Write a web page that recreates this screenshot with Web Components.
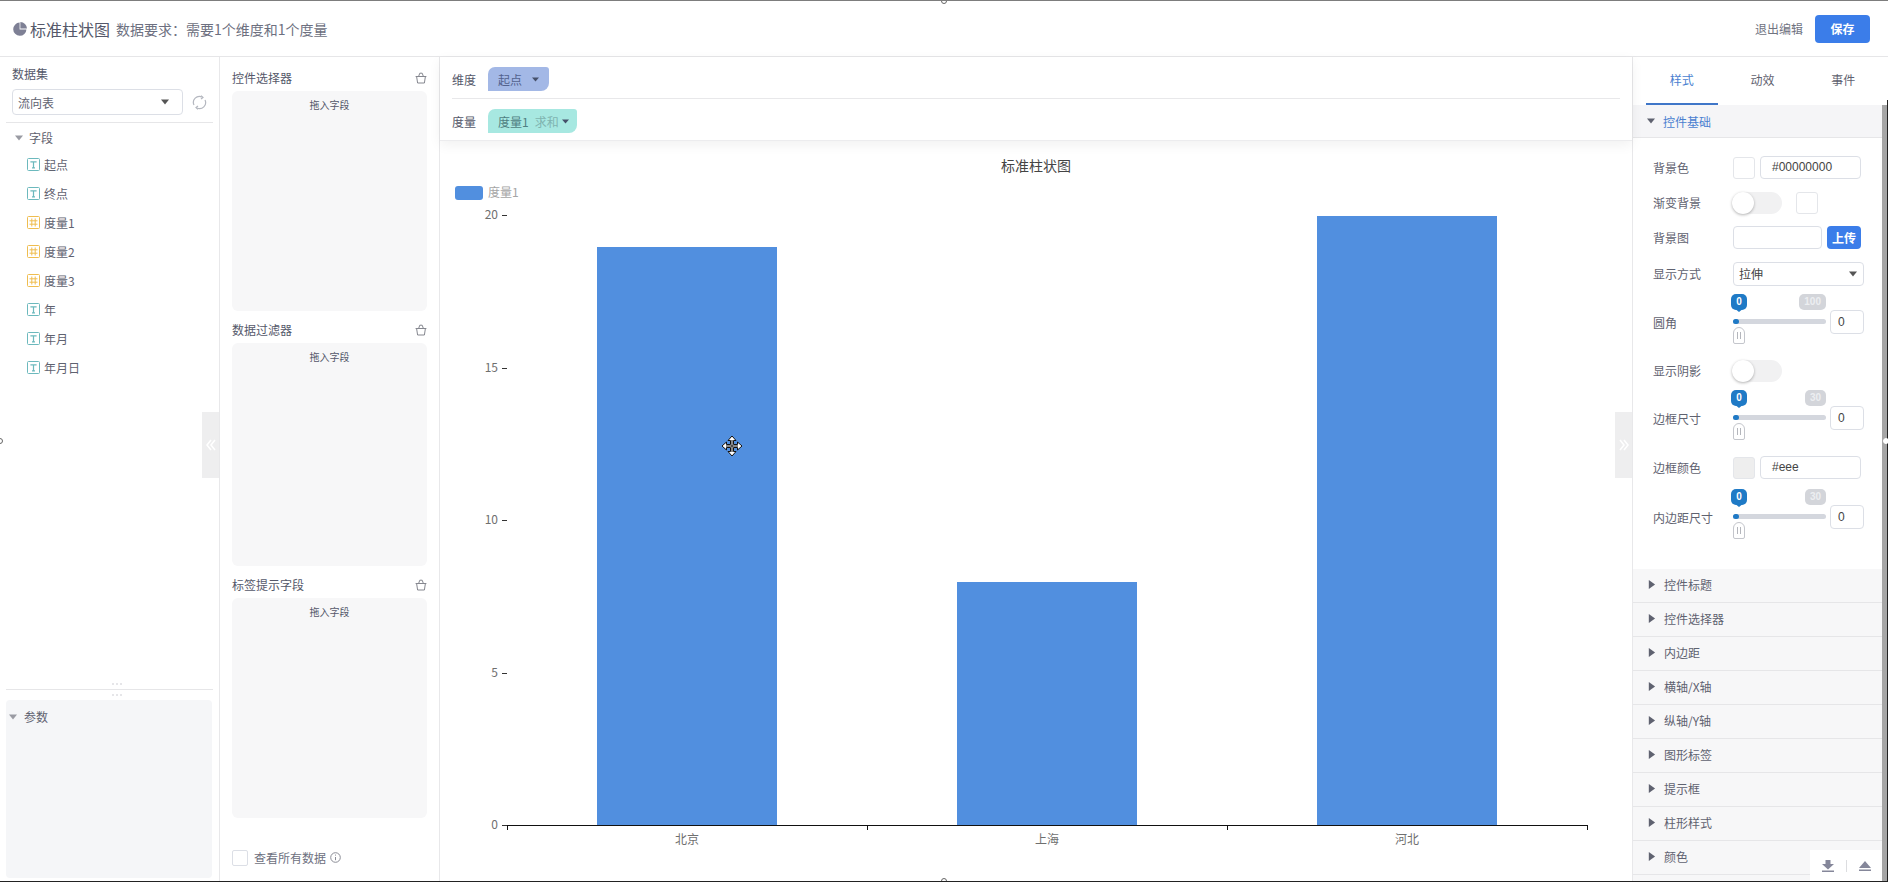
<!DOCTYPE html>
<html lang="zh">
<head>
<meta charset="utf-8">
<title>标准柱状图</title>
<style>
  html, body { margin: 0; padding: 0; height: 882px; overflow: hidden; background: #fff; }
  body { font-family: "Noto Sans CJK SC", "Liberation Sans", sans-serif; font-size: 12px; color: #5f6270; }
</style>
</head>
<body>
<editor-frame>
  <editor-header slot="header"></editor-header>
  <data-panel slot="data">
    <field-item kind="text">起点</field-item>
    <field-item kind="text">终点</field-item>
    <field-item kind="num">度量1</field-item>
    <field-item kind="num">度量2</field-item>
    <field-item kind="num">度量3</field-item>
    <field-item kind="text">年</field-item>
    <field-item kind="text">年月</field-item>
    <field-item kind="text">年月日</field-item>
  </data-panel>
  <field-panel slot="fields">
    <drop-zone label="控件选择器" area="220"></drop-zone>
    <drop-zone label="数据过滤器" area="223"></drop-zone>
    <drop-zone label="标签提示字段" area="220"></drop-zone>
  </field-panel>
  <chart-area slot="chart">
    <shelf-row label="维度" divider><shelf-chip tone="blue" width="61">起点</shelf-chip></shelf-row>
    <shelf-row label="度量"><shelf-chip tone="teal" width="89" note="求和">度量1</shelf-chip></shelf-row>
    <bar-chart></bar-chart>
  </chart-area>
  <style-panel slot="style">
    <color-row label="背景色" value="#00000000" fill="#fff" top="18"></color-row>
    <toggle-row label="渐变背景" swatch top="12"></toggle-row>
    <upload-row label="背景图" top="12"></upload-row>
    <select-row label="显示方式" value="拉伸" top="13"></select-row>
    <slider-row label="圆角" max="100" top="9"></slider-row>
    <toggle-row label="显示阴影" top="15"></toggle-row>
    <slider-row label="边框尺寸" max="30" top="8"></slider-row>
    <color-row label="边框颜色" value="#eee" fill="#eee" top="16"></color-row>
    <slider-row label="内边距尺寸" max="30" top="10"></slider-row>
    <collapse-row slot="rest">控件标题</collapse-row>
    <collapse-row slot="rest">控件选择器</collapse-row>
    <collapse-row slot="rest">内边距</collapse-row>
    <collapse-row slot="rest">横轴/X轴</collapse-row>
    <collapse-row slot="rest">纵轴/Y轴</collapse-row>
    <collapse-row slot="rest">图形标签</collapse-row>
    <collapse-row slot="rest">提示框</collapse-row>
    <collapse-row slot="rest">柱形样式</collapse-row>
    <collapse-row slot="rest">颜色</collapse-row>
  </style-panel>
</editor-frame>

<script>
const caret = (dir, color, size) => {
  const points = dir === "right" ? "2,0 9,5 2,10" : "0,2 10,2 5,8";
  return `<svg width="${size}" height="${size}" viewBox="0 0 10 10" style="flex:none;display:block"><polygon points="${points}" fill="${color}"/></svg>`;
};

const chevrons = (flip) => `<svg width="10" height="12" viewBox="0 0 10 12" fill="none" stroke="#fff" stroke-width="1.6" ${flip ? 'transform="scale(-1 1)"' : ""}><path d="M5 1 1 6l4 5M9 1 5 6l4 5"/></svg>`;

class BaseElement extends HTMLElement {
  render(html) {
    if (!this.shadowRoot) this.attachShadow({ mode: "open" });
    this.shadowRoot.innerHTML = html;
  }
}

class EditorFrame extends BaseElement {
  connectedCallback() {
    this.render(`
      <style>
        :host { display: block; position: relative; width: 1888px; height: 882px; box-sizing: border-box;
          border-top: 1px solid #7d7d7d; border-bottom: 1px solid #222; overflow: hidden; }
        .main { display: flex; height: 824px; }
        .knob { position: absolute; width: 6px; height: 6px; border-radius: 50%; background: #fff; border: 1px solid #666; box-sizing: border-box; }
        .edge { position: absolute; right: 0; top: 99px; bottom: 0; width: 1px; background: #222; }
      </style>
      <slot name="header"></slot>
      <div class="main">
        <slot name="data"></slot>
        <slot name="fields"></slot>
        <slot name="chart"></slot>
        <slot name="style"></slot>
      </div>
      <span class="edge"></span>
      <span class="knob" style="left:941px;top:-3px"></span>
      <span class="knob" style="left:-3px;top:437px"></span>
      <span class="knob" style="left:941px;top:877px"></span>
      <span class="knob" style="left:1883px;top:437px;border-color:#fff"></span>
    `);
  }
}

class EditorHeader extends BaseElement {
  connectedCallback() {
    this.render(`
      <style>
        :host { display: flex; align-items: center; height: 56px; box-sizing: border-box; border-bottom: 1px solid #e6e6e8; padding: 0 18px 0 13px; }
        .title { font-size: 16px; color: #55586a; margin-left: 3px; }
        .desc { font-size: 14px; color: #6d7080; margin-left: 6px; }
        .exit { margin-left: auto; font-size: 12px; color: #70737f; }
        button { margin-left: 12px; width: 55px; height: 28px; border: 0; border-radius: 4px; background: #3b7de9; color: #fff; font: bold 12px "Noto Sans CJK SC", sans-serif; }
      </style>
      <svg width="14" height="14" viewBox="0 0 14 14"><path d="M6.6 .6A6.6 6.6 0 1 0 13.4 7.4H6.6Z" fill="#7e8095"/><path d="M7.4 0V6.6H14A7 7 0 0 0 7.4 0Z" fill="#7e8095"/></svg>
      <span class="title">标准柱状图</span>
      <span class="desc">数据要求：需要1个维度和1个度量</span>
      <span class="exit">退出编辑</span>
      <button type="button">保存</button>
    `);
  }
}

class DataPanel extends BaseElement {
  connectedCallback() {
    this.render(`
      <style>
        :host { display: flex; flex-direction: column; position: relative; flex: none; width: 220px; box-sizing: border-box; border-right: 1px solid #e8e8ea; padding-top: 9px; }
        .label { line-height: 16px; margin-left: 12px; color: #55586a; }
        .pick { display: flex; align-items: center; margin: 7px 0 0 12px; }
        .select { display: flex; align-items: center; justify-content: space-between; width: 171px; height: 26px; box-sizing: border-box; border: 1px solid #dcdfe6; border-radius: 4px; padding: 0 13px 0 5px; color: #5f6270; }
        .refresh { margin-left: 9px; }
        hr { border: 0; height: 1px; background: #e6e6e8; margin: 0 6px; }
        .tree-head { display: flex; align-items: center; gap: 6px; margin: 7px 0 4px 15px; line-height: 16px; color: #5f6270; }
        .bottom { margin-top: auto; }
        .dots { display: flex; justify-content: center; align-items: center; gap: 2px; height: 6px; padding-left: 14px; }
        .dots i { width: 2px; height: 2px; border-radius: 50%; background: #dedee2; }
        .params { display: flex; align-items: flex-start; gap: 7px; height: 178px; box-sizing: border-box; margin: 2px 7px 3px 6px; padding: 9px 0 0 3px; background: #f5f6f8; border-radius: 4px; line-height: 16px; color: #5f6270; }
        .params svg { margin-top: 4px; }
        .fold { position: absolute; right: 0; top: 355px; width: 17px; height: 66px; background: #eeeeef; display: flex; align-items: center; justify-content: center; }
      </style>
      <div class="label">数据集</div>
      <div class="pick">
        <div class="select"><span>流向表</span>${caret("down", "#555", 8)}</div>
        <svg class="refresh" width="15" height="15" viewBox="0 0 15 15" fill="none" stroke="#b4b7bf" stroke-width="1.2"><path d="M2 10A6 6 0 0 1 10 2"/><path d="M13 5A6 6 0 0 1 5 13"/><path d="M9 .6 11 2.4 9 4"/><path d="M6 11 4 12.6 6 14.4"/></svg>
      </div>
      <hr style="margin-top:7px">
      <div class="tree-head">${caret("down", "#9a9ba3", 8)}<span>字段</span></div>
      <slot></slot>
      <div class="bottom">
        <div class="dots"><i></i><i></i><i></i></div>
        <hr style="margin-top:2px;margin-bottom:2px">
        <div class="dots"><i></i><i></i><i></i></div>
        <div class="params">${caret("down", "#9a9ba3", 8)}<span>参数</span></div>
      </div>
      <div class="fold">${chevrons(false)}</div>
    `);
  }
}

class FieldItem extends BaseElement {
  connectedCallback() {
    const num = this.getAttribute("kind") === "num";
    const color = num ? "#efbd4f" : "#6cb9bd";
    const glyph = num
      ? `<path d="M4.8 2.5v8M8.2 2.5v8M2.5 4.8h8M2.5 8.2h8" stroke="${color}" stroke-width="1" fill="none"/>`
      : `<path d="M3.4 3.8h6.2M6.5 3.8v6M5 9.8h3" stroke="${color}" stroke-width="1.2" fill="none"/>`;
    this.render(`
      <style>
        :host { display: flex; align-items: center; gap: 4px; height: 29px; padding-left: 27px; color: #5f6270; }
      </style>
      <svg width="13" height="13" viewBox="0 0 13 13"><rect x=".5" y=".5" width="12" height="12" rx="1" fill="none" stroke="${color}"/>${glyph}</svg>
      <slot></slot>
    `);
  }
}

class FieldPanel extends BaseElement {
  connectedCallback() {
    this.render(`
      <style>
        :host { display: flex; flex-direction: column; gap: 11px; flex: none; width: 220px; box-sizing: border-box; border-right: 1px solid #e8e8ea; padding: 13px 12px 0; }
        .all { display: flex; align-items: center; margin-top: 20px; color: #6d7080; }
        .box { width: 16px; height: 16px; box-sizing: border-box; border: 1px solid #dcdfe6; border-radius: 2px; margin-right: 6px; }
        svg { margin-left: 4px; }
      </style>
      <slot></slot>
      <div class="all"><span class="box"></span><span>查看所有数据</span>
        <svg width="11" height="11" viewBox="0 0 11 11" fill="none" stroke="#8b8d96"><circle cx="5.5" cy="5.5" r="4.8"/><path d="M5.5 5v3.2M5.5 2.6v1"/></svg>
      </div>
    `);
  }
}

class DropZone extends BaseElement {
  connectedCallback() {
    this.render(`
      <style>
        :host { display: block; }
        .head { display: flex; align-items: center; justify-content: space-between; height: 16px; line-height: 16px; color: #55586a; }
        .area { height: ${this.getAttribute("area")}px; margin-top: 5px; background: #f7f7f8; border-radius: 6px; box-sizing: border-box; padding-top: 7px; text-align: center; font-size: 10px; line-height: 14px; color: #55586a; }
      </style>
      <div class="head"><span>${this.getAttribute("label")}</span>
        <svg width="12" height="12" viewBox="0 0 12 12" fill="none" stroke="#85878f"><path d="M.6 4.5h10.8M1.6 4.5 2.6 11h6.8l1-6.5M3.6 4.5 4.8 1.2h2.4l1.2 3.3"/></svg>
      </div>
      <div class="area">拖入字段</div>
    `);
  }
}

class ChartArea extends BaseElement {
  connectedCallback() {
    this.render(`
      <style>
        :host { display: flex; flex-direction: column; position: relative; flex: none; width: 1192px; }
        .shelves { height: 84px; box-sizing: border-box; padding: 0 12px; border-bottom: 1px solid #ececee; box-shadow: 0 4px 12px rgba(0,0,0,.06); position: relative; z-index: 1; background: #fff; }
        .fold { position: absolute; right: 0; top: 355px; width: 17px; height: 66px; background: #eeeeef; display: flex; align-items: center; justify-content: center; z-index: 2; }
      </style>
      <div class="shelves"><slot name="shelf"></slot></div>
      <slot></slot>
      <div class="fold">${chevrons(true)}</div>
    `);
    this.querySelectorAll("shelf-row").forEach(row => row.slot = "shelf");
  }
}

class ShelfRow extends BaseElement {
  connectedCallback() {
    const divider = this.hasAttribute("divider");
    this.render(`
      <style>
        :host { display: flex; align-items: center; gap: 12px; box-sizing: border-box; height: ${divider ? 42 : 41}px; padding-top: 3px; ${divider ? "border-bottom: 1px solid #e8e8ea;" : ""} color: #55586a; }
      </style>
      <span>${this.getAttribute("label")}</span>
      <slot></slot>
    `);
  }
}

class ShelfChip extends BaseElement {
  connectedCallback() {
    const teal = this.getAttribute("tone") === "teal";
    const note = this.getAttribute("note");
    this.render(`
      <style>
        :host { display: flex; align-items: center; width: ${this.getAttribute("width")}px; height: 24px; box-sizing: border-box; padding: 0 3px 0 10px;
          background: ${teal ? "#a7e8e1" : "#a3b8e6"}; border-radius: 7px 3px 8px 0; color: ${teal ? "#4f7f82" : "#52628e"}; white-space: nowrap; }
        .note { margin-left: 6px; color: #7fb4b0; }
        svg { margin-left: ${teal ? 3 : 10}px; }
      </style>
      <slot></slot>${note ? `<span class="note">${note}</span>` : ""}
      <svg width="7" height="7" viewBox="0 0 10 10"><polygon points="0,2 10,2 5,8" fill="#46506a"/></svg>
    `);
  }
}

class BarChart extends BaseElement {
  connectedCallback() {
    const yTicks = [[215, 20], [368, 15], [520, 10], [673, 5], [825, 0]];
    const bars = [[597, 247, "北京", 687], [957, 582, "上海", 1047], [1317, 216, "河北", 1407]];
    this.render(`
      <style>
        :host { display: block; position: relative; flex: 1; }
        svg.plot { display: block; }
        text { font-family: "Noto Sans CJK SC", "Liberation Sans", sans-serif; font-size: 12px; fill: #6f6f6f; }
        .move { position: absolute; left: 281px; top: 294px; }
      </style>
      <svg class="plot" width="1192" height="740" viewBox="440 141 1192 740">
        <text x="1036" y="171" text-anchor="middle" style="font-size:14px;fill:#444">标准柱状图</text>
        <rect x="455" y="186" width="28" height="14" rx="3" fill="#518fdf"/>
        <text x="488" y="197" style="fill:#a5a5a5">度量1</text>
        ${bars.map(b => `<rect x="${b[0]}" y="${b[1]}" width="180" height="${825 - b[1]}" fill="#518fdf"/>`).join("")}
        ${yTicks.map(t => `<text x="498" y="${t[0] + 4}" text-anchor="end">${t[1]}</text><path d="M502 ${t[0] + .5}h5" stroke="#333"/>`).join("")}
        <path d="M507 825.5H1588" stroke="#111" stroke-width="1"/>
        <path d="M507.5 825v5M867.5 825v5M1227.5 825v5M1587.5 825v5" stroke="#111"/>
        ${bars.map(b => `<text x="${b[3]}" y="844" text-anchor="middle">${b[2]}</text>`).join("")}
      </svg>
      <svg class="move" width="22" height="22" viewBox="0 0 22 22">
        <path d="M11 1 15 5.5H12.5V9.5H16.5V7L21 11 16.5 15V12.5H12.5V16.5H15L11 21 7 16.5H9.5V12.5H5.5V15L1 11 5.5 7V9.5H9.5V5.5H7Z" fill="#fff" stroke="#111" stroke-width="1"/>
        <path d="M11 5v12M5 11h12" stroke="#111" stroke-width="1"/>
      </svg>
    `);
  }
}

class StylePanel extends BaseElement {
  connectedCallback() {
    this.render(`
      <style>
        :host { display: flex; flex-direction: column; position: relative; flex: none; width: 256px; box-sizing: border-box; border-left: 1px solid #e8e8ea; overflow: hidden; }
        .tabs { display: flex; height: 48px; flex: none; padding-left: 13px; }
        .tab { width: 72px; margin-right: 9px; box-sizing: border-box; padding-top: 15px; text-align: center; line-height: 16px; color: #5f6270; }
        .tab.on { color: #4a7fd0; border-bottom: 2px solid #3f76c8; }
        .open { display: flex; align-items: center; gap: 8px; height: 33px; flex: none; box-sizing: border-box; background: #f5f5f7; border-bottom: 1px solid #e6e6e8; padding-left: 14px; color: #4a7fd0; }
        .form { height: 431px; flex: none; box-sizing: border-box; padding: 0 20px; }
        .rest { background: #f7f7f8; flex: 1; }
        .bar { position: absolute; top: 48px; right: 1px; bottom: 0; width: 5px; background: #a6a6a6; }
        .tools { position: absolute; right: 6px; bottom: 0; width: 72px; height: 31px; background: #fff; display: flex; align-items: center; justify-content: center; }
        .tools i { width: 1px; height: 12px; background: #dcdde0; margin: 0 12px; }
      </style>
      <div class="tabs">
        <div class="tab on">样式</div><div class="tab">动效</div><div class="tab">事件</div>
      </div>
      <div class="open">${caret("down", "#5f6270", 8)}<span>控件基础</span></div>
      <div class="form"><slot></slot></div>
      <div class="rest"><slot name="rest"></slot></div>
      <div class="bar"></div>
      <div class="tools">
        <svg width="12" height="12" viewBox="0 0 12 12" fill="#85879a"><path d="M3.5 0h5v4H12L6 9.5 0 4h3.5ZM0 10.5h12V12H0Z"/></svg>
        <i></i>
        <svg width="12" height="12" viewBox="0 0 12 12" fill="#85879a"><path d="M6 1l6 7H0ZM0 9.5h12V11H0Z"/></svg>
      </div>
    `);
  }
}

const rowStyle = (top) => `
  :host { display: flex; align-items: center; height: 23px; margin-top: ${top}px; color: #5f6270; }
  .label { width: 80px; flex: none; }
  .swatch { width: 22px; height: 22px; box-sizing: border-box; border: 1px solid #e4e6ea; border-radius: 3px; flex: none; }
  .input { height: 23px; box-sizing: border-box; border: 1px solid #dcdfe6; border-radius: 4px; flex: none; }
`;

class ColorRow extends BaseElement {
  connectedCallback() {
    this.render(`
      <style>${rowStyle(this.getAttribute("top"))}
        .input { width: 101px; margin-left: 5px; padding-left: 11px; line-height: 21px; color: #444; font-family: "Liberation Sans", sans-serif; }
      </style>
      <span class="label">${this.getAttribute("label")}</span>
      <span class="swatch" style="background:${this.getAttribute("fill")}"></span>
      <span class="input">${this.getAttribute("value")}</span>
    `);
  }
}

class ToggleRow extends BaseElement {
  connectedCallback() {
    this.render(`
      <style>${rowStyle(this.getAttribute("top"))}
        .toggle { position: relative; width: 50px; height: 22px; border-radius: 11px; background: #f1f1f2; flex: none; margin-left: -1px; }
        .toggle::before { content: ""; position: absolute; left: 0; top: 0; width: 22px; height: 22px; border-radius: 50%; background: #fff; box-shadow: 0 1px 3px rgba(0,0,0,.3); }
        .swatch { margin-left: 14px; }
      </style>
      <span class="label">${this.getAttribute("label")}</span>
      <span class="toggle"></span>
      ${this.hasAttribute("swatch") ? '<span class="swatch"></span>' : ""}
    `);
  }
}

class UploadRow extends BaseElement {
  connectedCallback() {
    this.render(`
      <style>${rowStyle(this.getAttribute("top"))}
        .input { width: 89px; }
        button { width: 34px; height: 23px; margin-left: 5px; padding: 0; border: 0; border-radius: 4px; background: #3b7de9; color: #fff; font: bold 12px "Noto Sans CJK SC", sans-serif; }
      </style>
      <span class="label">${this.getAttribute("label")}</span>
      <span class="input"></span>
      <button type="button">上传</button>
    `);
  }
}

class SelectRow extends BaseElement {
  connectedCallback() {
    this.render(`
      <style>${rowStyle(this.getAttribute("top"))}
        .input { display: flex; align-items: center; justify-content: space-between; width: 131px; height: 24px; padding: 0 6px 0 5px; color: #444; }
      </style>
      <span class="label">${this.getAttribute("label")}</span>
      <span class="input"><span>${this.getAttribute("value")}</span>${caret("down", "#555", 8)}</span>
    `);
  }
}

class SliderRow extends BaseElement {
  connectedCallback() {
    this.render(`
      <style>
        :host { display: flex; height: 50px; margin-top: ${this.getAttribute("top")}px; color: #5f6270; position: relative; }
        .label { width: 80px; flex: none; padding-top: 21px; line-height: 16px; }
        .slider { position: relative; width: 93px; flex: none; }
        .track { position: absolute; left: 0; right: 0; top: 25px; height: 5px; border-radius: 3px; background: #d4d7de; }
        .track::before { content: ""; position: absolute; left: 0; top: 0; width: 6px; height: 5px; border-radius: 3px; background: #1f7ac6; }
        .low, .high { position: absolute; top: 0; height: 16px; font: bold 10px/16px "Liberation Sans", sans-serif; color: #fff; text-align: center; border-radius: 5px; }
        .low { left: -2px; width: 16px; background: #1f7ac6; }
        .low::after { content: ""; position: absolute; left: 3px; top: 14px; border: 5px solid transparent; border-top: 4px solid #1f7ac6; border-bottom: 0; }
        .high { right: 0; padding: 0 5px; background: #d3d5da; color: #eceef1; }
        .thumb { position: absolute; left: 0; top: 33px; width: 12px; height: 17px; box-sizing: border-box; border: 1px solid #c4c6cc; border-radius: 6px 6px 2px 2px; background: #fff; display: flex; align-items: center; justify-content: center; gap: 2px; }
        .thumb i { width: 1px; height: 7px; background: #b4b6bc; }
        .input { width: 34px; height: 24px; flex: none; box-sizing: border-box; margin: 16px 0 0 4px; border: 1px solid #dcdfe6; border-radius: 4px; padding-left: 7px; color: #444; font: 12px/22px "Liberation Sans", sans-serif; }
      </style>
      <span class="label">${this.getAttribute("label")}</span>
      <div class="slider">
        <span class="low">0</span><span class="high">${this.getAttribute("max")}</span>
        <span class="track"></span>
        <span class="thumb"><i></i><i></i></span>
      </div>
      <span class="input">0</span>
    `);
  }
}

class CollapseRow extends BaseElement {
  connectedCallback() {
    this.render(`
      <style>
        :host { display: flex; align-items: center; gap: 8px; height: 34px; box-sizing: border-box; border-bottom: 1px solid #e6e6e8; padding-left: 14px; padding-bottom: 2px; color: #5f6270; }
      </style>
      ${caret("right", "#5f6270", 9)}<slot></slot>
    `);
  }
}

customElements.define("editor-frame", EditorFrame);
customElements.define("editor-header", EditorHeader);
customElements.define("data-panel", DataPanel);
customElements.define("field-item", FieldItem);
customElements.define("field-panel", FieldPanel);
customElements.define("drop-zone", DropZone);
customElements.define("chart-area", ChartArea);
customElements.define("shelf-row", ShelfRow);
customElements.define("shelf-chip", ShelfChip);
customElements.define("bar-chart", BarChart);
customElements.define("style-panel", StylePanel);
customElements.define("color-row", ColorRow);
customElements.define("toggle-row", ToggleRow);
customElements.define("upload-row", UploadRow);
customElements.define("select-row", SelectRow);
customElements.define("slider-row", SliderRow);
customElements.define("collapse-row", CollapseRow);
</script>
</body>
</html>
